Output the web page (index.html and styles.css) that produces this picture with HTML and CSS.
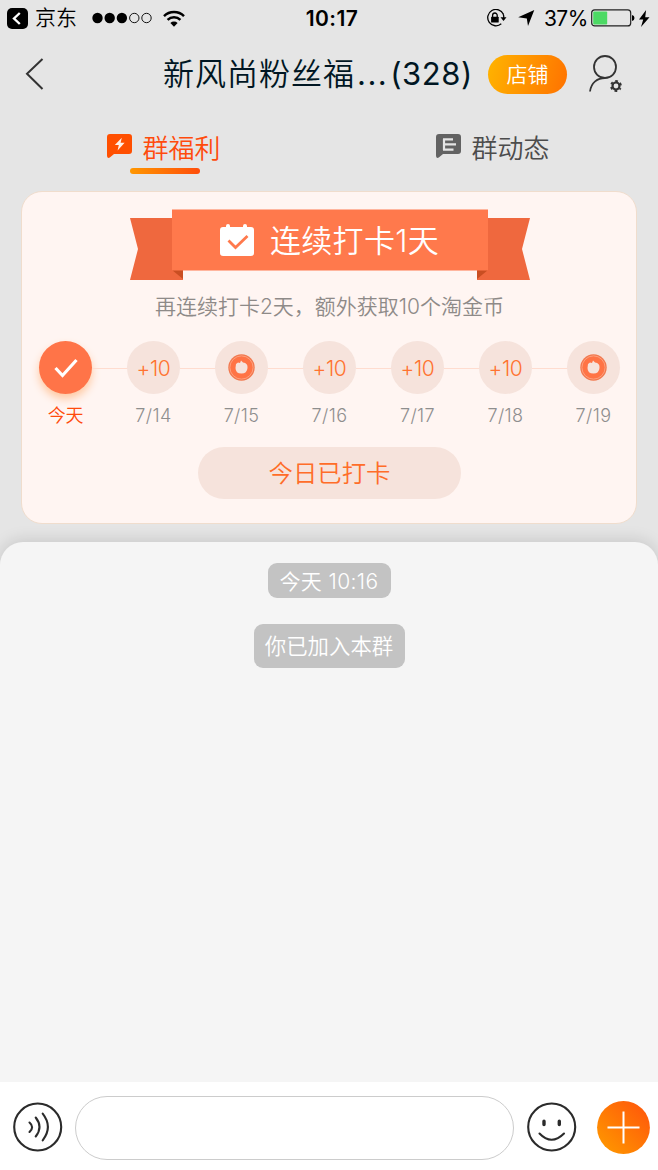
FILE: index.html
```html
<!DOCTYPE html>
<html lang="zh-CN">
<head>
<meta charset="utf-8">
<title>新风尚粉丝福利群</title>
<link rel="stylesheet" href="styles.css">
</head>
<body>
<div class="app">
  <div class="status">
    <div class="status-left">
      <svg width="21" height="21" viewBox="0 0 21 21"><rect width="21" height="21" rx="5"/><path d="M12.8 5 7 10.5l5.8 5.5" fill="none" stroke="#fff" stroke-width="2.4"/></svg>
      <span class="return-app">京东</span>
      <svg class="signal" width="60" height="12" viewBox="0 0 60 12"><circle cx="5.5" cy="6" r="5.2"/><circle cx="17.7" cy="6" r="5.2"/><circle cx="29.9" cy="6" r="5.2"/><g fill="none" stroke="#111"><circle cx="42.3" cy="6" r="4.7"/><circle cx="54.5" cy="6" r="4.7"/></g></svg>
      <svg class="wifi" width="22" height="17" viewBox="0 0 22 17"><g fill="none" stroke="#000" stroke-width="2.5"><path d="M1 6.1a14.2 14.2 0 0 1 20 0"/><path d="M4.6 9.9a9.1 9.1 0 0 1 12.8 0"/></g><path d="M7.4 13.1a5.1 5.1 0 0 1 7.2 0L11 16.8z"/></svg>
    </div>
    <span class="clock">10:17</span>
    <div class="status-right">
      <svg width="21" height="18" viewBox="0 0 21 18"><path d="M17.4 5.2A8.2 8.2 0 1 0 15.3 14.8M17.1 4.7A8.2 8.2 0 0 1 17.7 9" fill="none" stroke="#000" stroke-width="1.3"/><path d="M14.5 8.2h6l-3 3.8z"/><rect x="5.1" y="7.7" width="7.6" height="5.8" rx=".6"/><path d="M6.6 8V6.3a2.3 2.3 0 0 1 4.6 0V8" fill="none" stroke="#000" stroke-width="1.3"/></svg>
      <svg class="locate" width="17" height="16" viewBox="0 0 17 16"><path d="M16.3 0 10 16 8.8 8.500.2 7.300z"/></svg>
      <span class="percent">37%</span>
      <svg class="battery" width="44" height="18" viewBox="0 0 44 18"><rect x=".7" y=".9" width="39" height="16" rx="3" fill="none" stroke="#222" stroke-width="1.2"/><rect x="2.2" y="2.4" width="14" height="13" rx="1" fill="#4cd964"/><path d="M41 6q2.5.6 2.5 3T41 12z"/></svg>
      <svg class="bolt" width="12" height="17" viewBox="0 0 12 17"><path d="M8.1 0 1 9.6l4.2-.2L3 17l8.5-9.8-4.3.1z"/></svg>
    </div>
  </div>

  <div class="header">
    <svg class="back" width="19" height="32" viewBox="0 0 19 32"><path d="M17.5 1 2 15.7 17.5 31" fill="none" stroke="#333" stroke-width="2"/></svg>
    <div class="title"><span class="name">新风尚粉丝福</span><span class="dots">...</span><span class="count">(328)</span></div>
    <div class="shop">店铺</div>
    <svg class="member" width="34" height="38" viewBox="0 0 34 38"><g fill="none" stroke="#333"><circle cx="16" cy="12" r="11" stroke-width="1.8"/><path d="M1 36.5C2.2 27.5 8.500 23 16 23" stroke-width="1.8"/><circle cx="27" cy="31" r="3.500" stroke-width="2.2"/><circle cx="27" cy="31" r="5" stroke-width="1.8" stroke-dasharray="2.6 2.636" stroke-dashoffset="1.3" transform="rotate(30 27 31)"/></g></svg>
  </div>

  <div class="tabs">
    <div class="tab active">
      <svg width="26" height="25" viewBox="0 0 26 25"><path d="M3 0h19q3 0 3 3v14q0 3-3 3H7l-4.2 3.5Q0 25 0 21.5V3q0-3 3-3z"/><path d="m14.8 3.8-7 7.3h4l-1.2 5.3 7-7.7h-4z" fill="#fff0e8"/></svg>
      <span>群福利</span>
    </div>
    <div class="tab">
      <svg width="26" height="25" viewBox="0 0 26 25"><path d="M3 0h19q3 0 3 3v14q0 3-3 3H7l-4.2 3.5Q0 25 0 21.5V3q0-3 3-3z"/><path d="M7 5.3h10M7 10.3h13M7 15.6h10.5M8 5v11" stroke="#e5e5e5" stroke-width="2.2"/></svg>
      <span>群动态</span>
    </div>
  </div>

  <div class="card">
    <div class="ribbon">
      <svg class="ribbon-shape" width="400" height="71" viewBox="0 0 400 71"><path d="M0 9h53v62H0l8-31zM400 9h-53v62h53l-8-31z" fill="#ef683e"/><path d="M42 61h11v9zM358 61h-11v9z" fill="#c94e22"/><path d="M42 .5h316v61H42z" fill="#ff794c"/></svg>
      <svg class="calendar" width="34" height="32" viewBox="0 0 34 32"><path d="M3 3h3V2q0-2 2-2t2 2v1h13V2q0-2 2-2t2 2v1h4q3 0 3 3v23q0 3-3 3H3q-3 0-3-3V6q0-3 3-3z" fill="#fff"/><path d="m8.500 16.500 7 7L27.500 12" fill="none" stroke="#ff794c" stroke-width="2.800"/></svg>
      <span class="streak">连续打卡1天</span>
    </div>
    <div class="hint">再连续打卡2天，额外获取10个淘金币</div>
    <div class="steps">
      <div class="step today"><div class="dot"><svg width="24" height="20" viewBox="0 0 24 20"><path d="m1.500 10 7 7.500L22.500 2" fill="none" stroke="#fff" stroke-width="3.200"/></svg></div><span>今天</span></div>
      <div class="step"><div class="dot">+10</div><span>7/14</span></div>
      <div class="step"><div class="dot"><svg width="27" height="27" viewBox="0 0 27 27"><circle cx="13.500" cy="13.500" r="13.200" fill="#f1794f"/><circle cx="13.500" cy="13.500" r="11.600" fill="#ff7446" stroke="#ffb094" stroke-width=".7"/><path d="M8 10 10 8.500 12 9 13 6.500 15 8.500Q20 9 19.500 14 19 19.500 13.500 19.500 7.500 19.500 7.500 14z" fill="#f6e3dc"/></svg></div><span>7/15</span></div>
      <div class="step"><div class="dot">+10</div><span>7/16</span></div>
      <div class="step"><div class="dot">+10</div><span>7/17</span></div>
      <div class="step"><div class="dot">+10</div><span>7/18</span></div>
      <div class="step"><div class="dot"><svg width="27" height="27" viewBox="0 0 27 27"><circle cx="13.500" cy="13.500" r="13.200" fill="#f1794f"/><circle cx="13.500" cy="13.500" r="11.600" fill="#ff7446" stroke="#ffb094" stroke-width=".7"/><path d="M8 10 10 8.500 12 9 13 6.500 15 8.500Q20 9 19.500 14 19 19.500 13.500 19.500 7.500 19.500 7.500 14z" fill="#f6e3dc"/></svg></div><span>7/19</span></div>
    </div>
    <div class="done">今日已打卡</div>
  </div>

  <div class="chat">
    <div class="notice time">今天 10:16</div>
    <div class="notice joined">你已加入本群</div>
  </div>

  <div class="composer">
    <svg class="voice" width="50" height="50" viewBox="0 0 50 50"><g fill="none" stroke="#2b2b2b" stroke-width="2.100" stroke-linecap="round"><circle cx="24.700" cy="25" r="23.500"/><path d="M16.500 20.500q5.200 4.500 0 9.500M22.700 15.500q7.600 9.500 0 19M29.700 11.700q10.400 13.300 0 26.600"/></g></svg>
    <div class="field"></div>
    <svg class="smile" width="50" height="50" viewBox="0 0 50 50"><g fill="none" stroke="#2b2b2b" stroke-width="2.100" stroke-linecap="round"><circle cx="24.700" cy="25" r="23.500"/><path d="M12.500 31.500q12 12.500 24.500 0"/><path d="M17 19.300v3.200M32.300 19.300v3.200" stroke-width="3.400"/></g></svg>
    <svg class="plus" width="53" height="53" viewBox="0 0 53 53"><defs><linearGradient id="warm" x1="0" y1="1" x2="1" y2="0"><stop offset=".1" stop-color="#ff9500"/><stop offset=".9" stop-color="#ff5a0a"/></linearGradient></defs><circle cx="26.500" cy="26.500" r="26.400" fill="url(#warm)"/><path d="M10.500 26.500h32M26.500 10.500v32" stroke="#fff" stroke-width="2"/></svg>
  </div>
</div>
</body>
</html>
```
FILE: styles.css
```css
* { box-sizing: border-box; }
body { margin: 0; background: #e5e5e5; font-family: Inter, "Noto Sans CJK SC", sans-serif; }
svg { display: block; flex: none; }
.app { width: 658px; height: 1170px; display: flex; flex-direction: column; overflow: hidden; white-space: nowrap; background: #e5e5e5; }

.status { height: 36px; display: grid; grid-template-columns: 305px 54px 299px; align-items: center; }
.status-left { display: flex; align-items: center; padding-left: 7px; }
.return-app { width: 42px; margin-left: 7px; font-size: 21px; line-height: 30px; font-weight: 350; }
.signal { margin-left: 15px; }
.wifi { margin-left: 11px; }
.clock { font-size: 21px; font-weight: 600; text-align: center; letter-spacing: .4px; }
.status-right { display: flex; align-items: center; padding-left: 127px; }
.locate { margin-left: 11px; }
.percent { width: 42px; margin-left: 9px; font-size: 21px; letter-spacing: -.6px; }
.battery { margin-left: 5px; }
.bolt { margin-left: 3px; }

.header { height: 76px; display: flex; align-items: center; padding-left: 25px; }
.title { display: flex; align-items: center; width: 310px; margin-left: 119px; color: #001623; font-size: 31px; line-height: 44px; font-weight: 350; }
.name { width: 192px; letter-spacing: 1px; }
.dots { width: 36px; padding-left: 2px; letter-spacing: 1.500px; font-weight: 400; }
.count { letter-spacing: .6px; font-weight: 400; }
.shop { width: 79px; height: 39px; margin-left: 15px; border-radius: 20px; background: linear-gradient(105deg, #ffb400, #ff7200); color: #fff; font-size: 21px; font-weight: 350; line-height: 39px; text-align: center; }
.member { margin-left: 22px; }

.tabs { height: 79px; display: grid; grid-template-columns: 1fr 1fr; padding-top: 14px; }
.tab { position: relative; display: flex; align-items: center; justify-content: center; gap: 9px; height: 44px; padding-right: 1px; font-size: 26px; font-weight: 350; color: #4c4c4c; fill: #626262; }
.tab svg { margin-bottom: 3px; }
.tab span { padding-bottom: 4px; }
.active { color: #ff4b0c; fill: #ff4f00; }
.active::after { content: ""; position: absolute; left: 130px; top: 42px; width: 70px; height: 6px; border-radius: 3px; background: linear-gradient(90deg, #ff9700, #ff4d0b); }

.card { width: 616px; height: 333px; margin-left: 21px; padding: 17px 0 0 1px; border: 1px solid #f0ddcd; border-radius: 21px; background: #fff5f2; display: flex; flex-direction: column; align-items: center; }
.ribbon { position: relative; left: .5px; width: 400px; height: 71px; display: flex; align-items: flex-start; padding: 15px 0 0 90px; }
.ribbon-shape { position: absolute; inset: 0; }
.calendar, .streak { position: relative; }
.streak { margin-left: 16px; color: #fff; font-size: 31px; letter-spacing: .3px; line-height: 34px; font-weight: 350; }
.hint { margin-top: 11px; height: 33px; line-height: 32px; color: #8e8a88; font-size: 21px; font-weight: 350; }
.steps { width: 616px; margin: 17px -1px 0; display: grid; grid-template-columns: repeat(7, 1fr); }
.step { position: relative; display: flex; flex-direction: column; align-items: center; color: #8e8e8e; font-size: 18px; font-weight: 350; line-height: 26px; }
.step span { margin-top: 9px; margin-bottom: 1px; letter-spacing: .4px; }
.today span { letter-spacing: -.3px; }
.step:not(:last-child)::after { content: ""; position: absolute; left: calc(50% + 26px); top: 27px; width: 36px; height: 1px; background: #ffdccf; }
.dot { width: 53px; height: 53px; border-radius: 50%; background: #f6e3dc; display: flex; align-items: center; justify-content: center; color: #ff7330; font-size: 21px; letter-spacing: -.3px; padding-top: 2px; }
.dot svg { margin-top: -2px; }
.today { color: #ff4b0c; }
.today .dot { background: #ff7448; box-shadow: 0 5px 9px #ffc9a2; }
.done { width: 263px; height: 52px; margin-top: 17px; border-radius: 26px; background: #f6e3dc; color: #ff6d29; font-size: 24.400px; font-weight: 350; line-height: 53px; text-align: center; }

.chat { height: 540px; margin-top: 18px; padding-top: 21px; border-radius: 23px 23px 0 0; background: #f5f5f5; box-shadow: 0 -2px 16px rgba(0,0,0,.13); display: flex; flex-direction: column; align-items: center; }
.notice { border-radius: 9px; background: #c3c3c3; color: #fff; text-align: center; font-weight: 350; }
.time { width: 123px; height: 35px; font-size: 21px; letter-spacing: .4px; line-height: 37px; }
.joined { width: 151px; height: 44px; margin-top: 26px; font-size: 21.400px; line-height: 44px; }

.composer { position: relative; height: 88px; display: flex; align-items: center; padding: 3px 0 0 13px; background: #fff; }
.field { width: 439px; height: 64px; margin-left: 12px; border: 1px solid #ccc; border-radius: 32px; }
.voice, .smile { margin-bottom: 2px; }
.smile { margin-left: 13px; }
.plus { margin-left: 20px; }
```
